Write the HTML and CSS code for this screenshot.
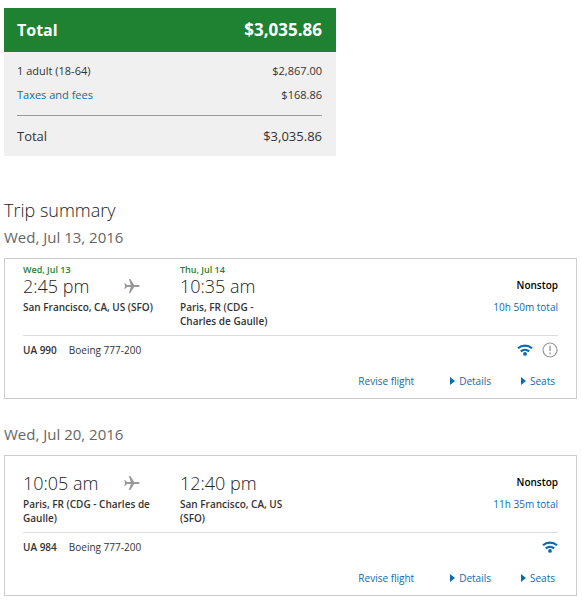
FILE: index.html
```
<!doctype html>
<html lang="en">
<head>
	<meta charset="utf-8"/>
	<meta name="viewport" content="width=device-width,initial-scale=1.0"/>
	<title>Trip summary</title>
	<link rel="stylesheet" href="styles.css">
</head>
<body>

<!-- shared icons -->
<svg class="sprite" aria-hidden="true">
	<symbol id="plane" viewBox="0 0 16 16">
		<path d="M15.800 8c0-.6-.8-.9-1.800-.9h-3.800L6.300 1H4.900l1.900 6.100H3L1.300 5.300H.3L1.100 8l-.8 2.700h1L3 8.900h3.800L4.900 15h1.400l3.900-6.100H14c1 0 1.800-.3 1.800-.9z"/>
	</symbol>
	<symbol id="wifi" viewBox="0 0 16 12">
		<path d="M1 4.200a10.500 10.500 0 0 1 14 0M3.800 7.400a6.300 6.300 0 0 1 8.400 0" fill="none" stroke="currentColor" stroke-width="2.200"/>
		<circle cx="8" cy="9.900" r="1.900" fill="currentColor"/>
	</symbol>
	<symbol id="alert" viewBox="0 0 16 16">
		<circle cx="8" cy="8" r="7" fill="none" stroke="currentColor" stroke-width="1.200"/>
		<path d="M8 3.800v5.200M8 10.600v1.600" fill="none" stroke="currentColor" stroke-width="1.400"/>
	</symbol>
</svg>

<div class="fare">
	<div class="fare-head"><span>Total</span><span class="price">$3,035.86</span></div>
	<div class="fare-body">
		<div class="fare-row"><span>1 adult (18-64)</span><span>$2,867.00</span></div>
		<div class="fare-row"><a href="#">Taxes and fees</a><span>$168.86</span></div>
		<div class="fare-row fare-total"><span>Total</span><span>$3,035.86</span></div>
	</div>
</div>

<h1>Trip summary</h1>

<h2>Wed, Jul 13, 2016</h2>
<div class="flight">
	<div class="route">
		<div class="stop">
			<div class="day">Wed, Jul 13</div>
			<div class="time">2:45 pm</div>
			<svg class="plane"><use href="#plane"/></svg>
			<div class="place">San Francisco, CA, US (SFO)</div>
		</div>
		<div class="stop arrive">
			<div class="day">Thu, Jul 14</div>
			<div class="time">10:35 am</div>
			<div class="place">Paris, FR (CDG - Charles de Gaulle)</div>
		</div>
		<div class="length">
			<div class="nonstop">Nonstop</div>
			<a href="#">10h 50m total</a>
		</div>
	</div>
	<div class="craft">
		<b>UA 990</b><span>Boeing 777-200</span>
		<div class="amenities">
			<svg class="wifi"><use href="#wifi"/></svg>
			<svg class="alert"><use href="#alert"/></svg>
		</div>
	</div>
	<div class="actions">
		<a href="#">Revise flight</a>
		<a href="#" class="more">Details</a>
		<a href="#" class="more">Seats</a>
	</div>
</div>

<h2>Wed, Jul 20, 2016</h2>
<div class="flight">
	<div class="route">
		<div class="stop">
			<div class="day"></div>
			<div class="time">10:05 am</div>
			<svg class="plane"><use href="#plane"/></svg>
			<div class="place">Paris, FR (CDG - Charles de Gaulle)</div>
		</div>
		<div class="stop arrive">
			<div class="day"></div>
			<div class="time">12:40 pm</div>
			<div class="place">San Francisco, CA, US (SFO)</div>
		</div>
		<div class="length">
			<div class="nonstop">Nonstop</div>
			<a href="#">11h 35m total</a>
		</div>
	</div>
	<div class="craft">
		<b>UA 984</b><span>Boeing 777-200</span>
		<div class="amenities">
			<svg class="wifi"><use href="#wifi"/></svg>
		</div>
	</div>
	<div class="actions">
		<a href="#">Revise flight</a>
		<a href="#" class="more">Details</a>
		<a href="#" class="more">Seats</a>
	</div>
</div>

</body>
</html>
```
FILE: styles.css
```
*{margin:0;padding:0;box-sizing:border-box}
body{padding:8px 4px 4px;font:11px/14px "Open Sans",sans-serif;color:#333;background:#fff}
a{color:#0a6cb0;text-decoration:none}
a:hover{text-decoration:underline}
.sprite{display:none}

.fare{max-width:332px;margin-bottom:41px;background:#f0f0f0}
.fare-head{display:flex;justify-content:space-between;padding:10px 14px 10px 13px;background:#1e8232;color:#fff;font-size:16px;line-height:24px;font-weight:bold}
.price{font-size:17px}
.fare-body{padding:7px 14px 8px 13px}
.fare-row{display:flex;justify-content:space-between;line-height:24px}
.fare-total{margin-top:8px;padding-top:8px;border-top:1px solid #999;font-size:13px}

h1{font-size:18px;line-height:26px;font-weight:300;color:#222}
h2{margin-bottom:10px;padding-top:4px;font-size:15px;line-height:21px;font-weight:normal;color:#666}

.flight{margin:0 1px 21px 0;padding:4px 18px 10px;border:1px solid #ccc;font-size:10px}
.route{display:flex;padding-bottom:7px;border-bottom:1px solid #ddd}
.stop{display:grid;grid-template-columns:101px 1fr;grid-template-rows:14px 18px auto;flex:0 0 157px;align-content:start}
.stop.arrive{grid-template-columns:1fr;flex-basis:110px}
.day{grid-column:1/-1;font-size:9px;font-weight:600;color:#1e8232}
.time{font-size:18px;line-height:18px;font-weight:300;color:#222}
.plane{align-self:center;width:16px;height:16px;fill:#999}
.place{grid-column:1/-1;padding-top:5px;margin-right:20px;font-weight:600}
.arrive .place{margin-right:0}
.length{flex:1;padding-top:15px;text-align:right}
.nonstop{margin-bottom:8px;font-weight:600;color:#000}

.craft{display:flex;align-items:center;gap:12px;height:28px}
.craft b{font-weight:600}
.amenities{display:flex;align-items:center;gap:9px;margin-left:auto}
.wifi{width:16px;height:12px;color:#0a6cb0}
.alert{width:16px;height:16px;color:#999}

.actions{display:flex;justify-content:flex-end;padding:10px 3px 0 0}
.more{margin-left:36px}
.more + .more{margin-left:30px}
.more:before{content:"";display:inline-block;margin-right:4px;border:4px solid transparent;border-left:5px solid #0a6cb0;border-right:0}
```
